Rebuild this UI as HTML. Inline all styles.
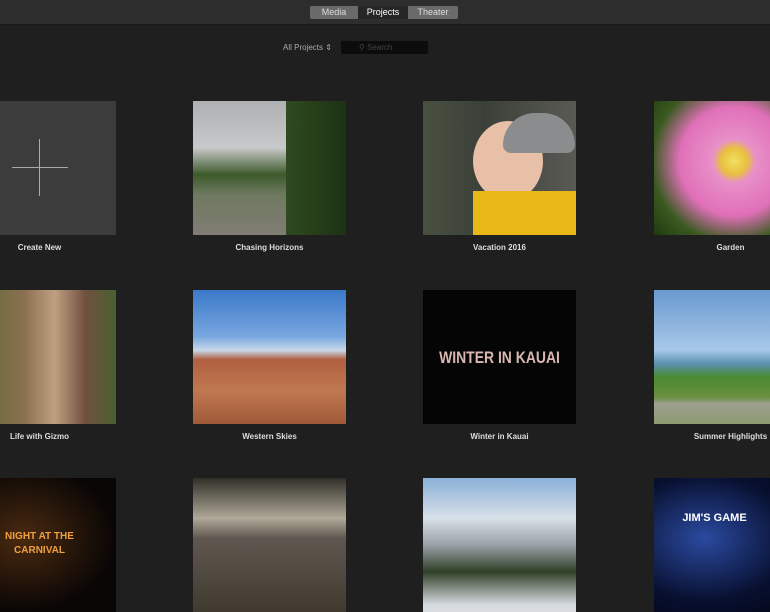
<!DOCTYPE html><html><head><style>
body{margin:0;width:770px;height:578px;overflow:hidden;background:#1f1f1f;font-family:"Liberation Sans",sans-serif;position:relative}
.top{position:absolute;left:0;top:0;width:770px;height:24px;background:#2d2d2d;border-bottom:1px solid #1a1a1a}
.b{position:absolute;top:6px;height:13px;font-size:9px;line-height:13px;text-align:center;color:#ddd}
.t{position:absolute;width:153px;height:134px;overflow:hidden}
.l{position:absolute;width:153px;text-align:center;color:#ddd;font-size:8px;font-weight:bold}
</style></head><body>
<div class="top">
<div class="b" style="left:310px;width:48px;background:#6a6a6a;border-radius:2px 0 0 2px">Media</div>
<div class="b" style="left:358px;width:50px;background:#262626;color:#fff">Projects</div>
<div class="b" style="left:408px;width:50px;background:#6a6a6a;border-radius:0 2px 2px 0">Theater</div>
</div>
<div style="position:absolute;left:283px;top:43px;font-size:8px;color:#aaa">All Projects ⇕</div>
<div style="position:absolute;left:341px;top:41px;width:87px;height:13px;background:#0c0c0c;border-radius:2px;font-size:8px;color:#444;line-height:13px;padding-left:18px;box-sizing:border-box">⚲ Search</div>

<div class="t" style="left:-37px;top:101px;background:#3c3c3c"><div style="position:absolute;left:76px;top:38px;width:1px;height:57px;background:#aaa"></div><div style="position:absolute;left:49px;top:66px;width:56px;height:1px;background:#aaa"></div></div>
<div class="l" style="left:-37px;top:243px">Create New</div>

<div class="t" style="left:193px;top:101px;background:linear-gradient(180deg,#aeb0b2 0%,#c8c9ca 35%,#3d5a2a 55%,#6f7a60 70%,#807c74 100%)"><div style="position:absolute;right:0;top:0;width:60px;height:134px;background:linear-gradient(90deg,#2f4a20,#1d3315)"></div></div>
<div class="l" style="left:193px;top:243px">Chasing Horizons</div>

<div class="t" style="left:423px;top:101px;background:linear-gradient(90deg,#4a5040,#3a4038 40%,#5a5a55)"><div style="position:absolute;left:50px;top:20px;width:70px;height:80px;border-radius:50%;background:#e8c0a8"></div><div style="position:absolute;left:80px;top:12px;width:72px;height:40px;border-radius:40px 40px 10px 10px;background:#8a8c8e"></div><div style="position:absolute;left:50px;top:90px;width:103px;height:44px;background:#e8b818"></div></div>
<div class="l" style="left:423px;top:243px">Vacation 2016</div>

<div class="t" style="left:654px;top:101px;background:radial-gradient(circle at 80px 60px,#f2e060 0,#e8c040 12%,#e890c8 20%,#e070b8 50%,#3a5a20 75%,#203a10 100%)"></div>
<div class="l" style="left:654px;top:243px">Garden</div>

<div class="t" style="left:-37px;top:290px;background:linear-gradient(90deg,#5a6a30,#8a7050 40%,#c0a080 60%,#705040 80%,#4a6030)"></div>
<div class="l" style="left:-37px;top:432px">Life with Gizmo</div>

<div class="t" style="left:193px;top:290px;background:linear-gradient(180deg,#3a78c8 0%,#7aa8e0 35%,#c8d8e8 45%,#b06040 52%,#c07850 75%,#a05a38 100%)"></div>
<div class="l" style="left:193px;top:432px">Western Skies</div>

<div class="t" style="left:423px;top:290px;background:#050505"><div style="position:absolute;top:58px;width:153px;text-align:center;font-size:17px;font-weight:bold;color:#d8b8b0;transform:scaleX(0.82)">WINTER IN KAUAI</div></div>
<div class="l" style="left:423px;top:432px">Winter in Kauai</div>

<div class="t" style="left:654px;top:290px;background:linear-gradient(180deg,#6a9ad0 0%,#a8c8e8 45%,#5a90b0 55%,#4a8a30 65%,#6a9040 80%,#a0a090 85%,#8a9a70 100%)"></div>
<div class="l" style="left:654px;top:432px">Summer Highlights</div>

<div class="t" style="left:-37px;top:478px;background:radial-gradient(ellipse at 60px 60px,#4a2a10,#0a0605 70%)"><div style="position:absolute;top:52px;width:153px;text-align:center;font-size:10px;font-weight:bold;color:#f0a040;line-height:14px">NIGHT AT THE<br>CARNIVAL</div></div>
<div class="t" style="left:193px;top:478px;background:linear-gradient(180deg,#303028 0%,#b0a898 30%,#605850 45%,#403a30 100%)"></div>
<div class="t" style="left:423px;top:478px;background:linear-gradient(180deg,#8ab0d8 0%,#d8e0e8 30%,#9aa0a8 50%,#304028 70%,#d8dce0 95%)"></div>
<div class="t" style="left:654px;top:478px;background:radial-gradient(ellipse at 50px 60px,#2a4aa0,#081030 60%,#020410)"><div style="position:absolute;top:34px;left:-16px;width:153px;text-align:center;font-size:11px;font-weight:bold;color:#fff">JIM'S GAME</div></div>
</body></html>
